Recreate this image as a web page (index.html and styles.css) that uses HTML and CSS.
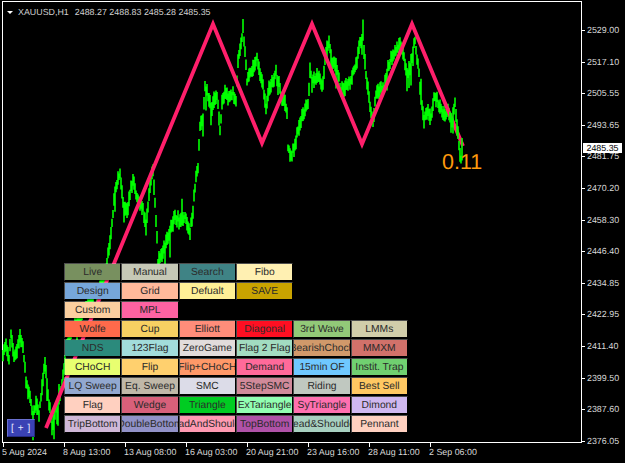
FILE: index.html
```html
<!DOCTYPE html>
<html lang="en">
<head>
<meta charset="utf-8">
<title>XAUUSD,H1</title>
<link rel="stylesheet" href="styles.css">
</head>
<body>
<div class="terminal">
  <div class="plot">
    <svg class="chart" viewBox="0 0 625 463" width="625" height="463" aria-hidden="true">
      <path id="bars" class="bars" d=""/>
      <polyline class="zigzag" points="46,428 213,24 262,143 312,24 362,144 412,24 463,146"/>
      <path id="bars-top" class="bars" d=""/>
    </svg>
    <div class="legend"><span class="caret"></span><span class="symbol">XAUUSD,H1</span><span>2488.27 2488.83 2485.28 2485.35</span></div>
    <div class="ratio">0.11</div>
    <div class="price-tag">2485.35</div>

    <div class="panel">
      <div class="btn c-live">Live</div><div class="btn c-manual">Manual</div><div class="btn c-search">Search</div><div class="btn c-fibo">Fibo</div><div class="blank"></div><div class="blank"></div>
      <div class="btn c-design">Design</div><div class="btn c-grid">Grid</div><div class="btn c-defualt">Defualt</div><div class="btn c-save">SAVE</div><div class="blank"></div><div class="blank"></div>
      <div class="btn c-custom">Custom</div><div class="btn c-mpl">MPL</div><div class="blank"></div><div class="blank"></div><div class="blank"></div><div class="blank"></div>
      <div class="btn c-wolfe">Wolfe</div><div class="btn c-cup">Cup</div><div class="btn c-elliott">Elliott</div><div class="btn c-diagonal">Diagonal</div><div class="btn c-wave">3rd Wave</div><div class="btn c-lmms">LMMs</div>
      <div class="btn c-nds">NDS</div><div class="btn c-flag123">123Flag</div><div class="btn c-zero">ZeroGame</div><div class="btn c-flag2">Flag 2 Flag</div><div class="btn c-bearish">BearishChoch</div><div class="btn c-mmxm">MMXM</div>
      <div class="btn c-choch">CHoCH</div><div class="btn c-flip">Flip</div><div class="btn c-flipchoch">Flip+CHoCH</div><div class="btn c-demand">Demand</div><div class="btn c-of">15min OF</div><div class="btn c-trap">Instit. Trap</div>
      <div class="btn c-lq">LQ Sweep</div><div class="btn c-eq">Eq. Sweep</div><div class="btn c-smc">SMC</div><div class="btn c-step">5StepSMC</div><div class="btn c-riding">Riding</div><div class="btn c-best">Best Sell</div>
      <div class="btn c-flag">Flag</div><div class="btn c-wedge">Wedge</div><div class="btn c-triangle">Triangle</div><div class="btn c-ex">ExTariangle</div><div class="btn c-sy">SyTriangle</div><div class="btn c-dimond">Dimond</div>
      <div class="btn c-trip">TripBottom</div><div class="btn c-double">DoubleBottom</div><div class="btn c-head">HeadAndShoulder</div><div class="btn c-top">TopBottom</div><div class="btn c-headamp">Head&amp;Shoulder</div><div class="btn c-pennant">Pennant</div>
    </div>

    <div class="toggle">[ + ]</div>
  </div>

  <div class="y-axis">
    <span>2529.00</span><span>2517.10</span><span>2505.55</span><span>2493.65</span><span>2481.75</span><span>2470.20</span><span>2458.30</span><span>2446.40</span><span>2434.85</span><span>2422.95</span><span>2411.40</span><span>2399.50</span><span>2387.60</span><span>2376.05</span>
  </div>

  <div class="x-axis">
    <span>5 Aug 2024</span><span>8 Aug 13:00</span><span>13 Aug 08:00</span><span>16 Aug 03:00</span><span>20 Aug 21:00</span><span>23 Aug 16:00</span><span>28 Aug 11:00</span><span>2 Sep 06:00</span>
  </div>
</div>
<script src="chart.js"></script>
</body>
</html>
```
FILE: styles.css
```css
* { box-sizing: border-box; }
html, body { margin: 0; padding: 0; background: #000; }
body { font-family: "Liberation Sans", Arial, sans-serif; color: #d8d8d8; overflow: hidden; text-rendering: geometricPrecision; }

.terminal {
  width: 625px;
  height: 463px;
  padding: 1px 0 0 2px;
  display: grid;
  grid-template-columns: 580px 43px;
  grid-template-rows: 442px 20px;
  background: #000;
}

.plot {
  position: relative;
  border: 1px solid #fff;
}

.chart { position: absolute; left: -3px; top: -2px; display: block; }
.bars { fill: none; stroke: #00ff00; stroke-width: 1.6; }
.zigzag { fill: none; stroke: #ff1f6b; stroke-width: 3.8; stroke-linejoin: miter; }

.legend {
  position: absolute;
  left: 4px;
  top: 4px;
  display: flex;
  align-items: center;
  font-size: 8.9px;
  line-height: 12px;
  color: #d0d0d0;
}
.caret {
  width: 0;
  height: 0;
  margin-right: 5px;
  border-left: 3px solid transparent;
  border-right: 3px solid transparent;
  border-top: 3px solid #fff;
}
.symbol { margin-right: 6px; }

.ratio {
  position: absolute;
  left: 439px;
  top: 147px;
  font-size: 21.5px;
  line-height: 26px;
  color: #ff9a0c;
}

.price-tag {
  position: absolute;
  left: 580px;
  top: 141px;
  width: 39px;
  height: 10px;
  background: #fff;
  color: #000;
  font-size: 8.9px;
  line-height: 10px;
  text-align: center;
}

.panel {
  position: absolute;
  left: 61px;
  top: 261px;
  width: 344px;
  display: grid;
  grid-template-columns: repeat(6, 1fr);
  grid-auto-rows: 18px;
  row-gap: 1px;
}

.btn {
  display: flex;
  align-items: center;
  justify-content: center;
  overflow: hidden;
  white-space: nowrap;
  font-size: 10.3px;
  color: #2b2b2b;
  border-top: 1px solid rgba(255, 255, 255, 0.3);
  border-left: 1px solid rgba(255, 255, 255, 0.3);
  border-bottom: 1px solid rgba(0, 0, 0, 0.35);
  border-right: 1px solid rgba(0, 0, 0, 0.2);
  background-clip: padding-box;
}

.c-live { background-color: #78905f; }
.c-manual { background-color: #c6c8b6; }
.c-search { background-color: #3f8385; }
.c-fibo { background-color: #fff0b2; }
.c-design { background-color: #76a6da; }
.c-grid { background-color: #ffb99b; }
.c-defualt { background-color: #fff096; }
.c-save { background-color: #c9a300; }
.c-custom { background-color: #fbcf9f; }
.c-mpl { background-color: #fd62a2; }
.c-wolfe { background-color: #ff6a4b; }
.c-cup { background-color: #f7d062; }
.c-elliott { background-color: #ff8d7a; }
.c-diagonal { background-color: #ff0f22; }
.c-wave { background-color: #92c978; }
.c-lmms { background-color: #d1cdaa; }
.c-nds { background-color: #2b8a7c; }
.c-flag123 { background-color: #a2dcdb; }
.c-zero { background-color: #e2dcdb; }
.c-flag2 { background-color: #a2dcc1; }
.c-bearish { background-color: #d1996a; }
.c-mmxm { background-color: #d1716a; }
.c-choch { background-color: #e8ff70; }
.c-flip { background-color: #ffd06e; }
.c-flipchoch { background-color: #ff9868; }
.c-demand { background-color: #ff6a9a; }
.c-of { background-color: #6fc8ff; }
.c-trap { background-color: #70d070; }
.c-lq { background-color: #92a8d0; }
.c-eq { background-color: #c0b8a8; }
.c-smc { background-color: #dcdce8; }
.c-step { background-color: #d18a9a; }
.c-riding { background-color: #c0c8c0; }
.c-best { background-color: #ffc862; }
.c-flag { background-color: #ffd0c0; }
.c-wedge { background-color: #d8607a; }
.c-triangle { background-color: #00cc22; }
.c-ex { background-color: #92ffb2; }
.c-sy { background-color: #ff70b0; }
.c-dimond { background-color: #d0b8f0; }
.c-trip { background-color: #d0b8d8; }
.c-double { background-color: #9292c8; }
.c-head { background-color: #ff9ab2; }
.c-top { background-color: #b052a8; }
.c-headamp { background-color: #a8d0c0; }
.c-pennant { background-color: #ffd0c0; }

.toggle {
  position: absolute;
  left: 4px;
  top: 417px;
  width: 28px;
  height: 18px;
  display: flex;
  align-items: center;
  justify-content: center;
  background: #3a42b4;
  border-top: 1px solid #6a70d0;
  border-left: 1px solid #6a70d0;
  border-bottom: 1px solid #252a80;
  border-right: 1px solid #252a80;
  color: #e8e8ff;
  font-size: 10px;
  letter-spacing: 0.6px;
}

.y-axis {
  display: flex;
  flex-direction: column;
  justify-content: space-between;
  padding: 24px 0 0 0;
  margin-bottom: -4px;
  font-size: 8.9px;
  line-height: 11px;
}
.y-axis span { position: relative; padding-left: 5px; }
.y-axis span::before {
  content: "";
  position: absolute;
  left: 0;
  top: 5px;
  width: 3px;
  height: 1px;
  background: #fff;
}

.x-axis {
  grid-column: 1 / -1;
  display: grid;
  grid-template-columns: repeat(8, 61px);
  font-size: 8.9px;
  line-height: 11px;
  padding-top: 4px;
}
.x-axis span { position: relative; white-space: nowrap; }
.x-axis span::before {
  content: "";
  position: absolute;
  left: 1px;
  top: -4px;
  width: 1px;
  height: 4px;
  background: #fff;
}
```
FILE: chart.js
```js
(function () {
  var pts = [3,355,6,345,9,360,11,335,14,355,17,350,20,335,23,350,26,380,30,400,33,415,36,405,39,415,42,385,45,362,48,395,52,425,56,410,60,395,63,375,67,345,72,330,78,322,85,310,92,300,100,288,107,265,110,240,112,225,115,190,120,172,123,205,127,210,133,178,137,198,142,205,146,225,150,185,153,168,156,220,158,262,162,255,167,238,172,225,175,215,180,222,185,215,190,232,193,212,196,175,198,165,200,125,203,120,205,90,208,95,211,108,214,100,217,95,220,130,222,100,226,93,230,97,233,92,236,105,238,60,241,45,243,28,245,55,247,80,250,72,254,65,257,58,260,72,263,85,266,110,269,88,273,80,276,72,279,85,282,100,285,100,287,115,288,150,291,155,294,148,297,135,300,125,304,112,308,103,310,70,312,85,316,75,320,78,323,85,326,50,329,40,332,62,335,62,338,75,341,90,344,88,348,85,352,75,356,65,360,40,363,38,366,75,370,108,373,120,376,95,380,90,384,88,388,70,392,58,396,52,400,40,404,58,408,75,411,60,415,42,418,65,421,95,424,120,427,110,431,118,434,100,437,100,440,108,444,115,448,110,452,120,455,105,457,125,459,145,461,160,463,150];
  var seed = 20240805;
  function rnd() {
    seed = (seed * 1664525 + 1013904223) % 4294967296;
    return seed / 4294967296;
  }
  var under = [], over = [];
  for (var i = 0; i + 3 < pts.length; i += 2) {
    var x0 = pts[i], y0 = pts[i + 1], x1 = pts[i + 2], y1 = pts[i + 3];
    for (var x = x0; x < x1; x += 1) {
      var t = (x - x0) / (x1 - x0);
      var c = y0 + (y1 - y0) * t + (rnd() - 0.5) * 5;
      var up = 3 + rnd() * 5;
      var down = 3 + rnd() * 6;
      if (rnd() < 0.06) { down += 8 + rnd() * 12; }
      if (rnd() < 0.03) { up += 6 + rnd() * 8; }
      var seg = "M" + x + " " + (c - up).toFixed(1) + "V" + (c + down).toFixed(1);
      (x >= 450 ? over : under).push(seg);
    }
  }
  document.getElementById("bars").setAttribute("d", under.join(""));
  document.getElementById("bars-top").setAttribute("d", over.join(""));
})();
```
